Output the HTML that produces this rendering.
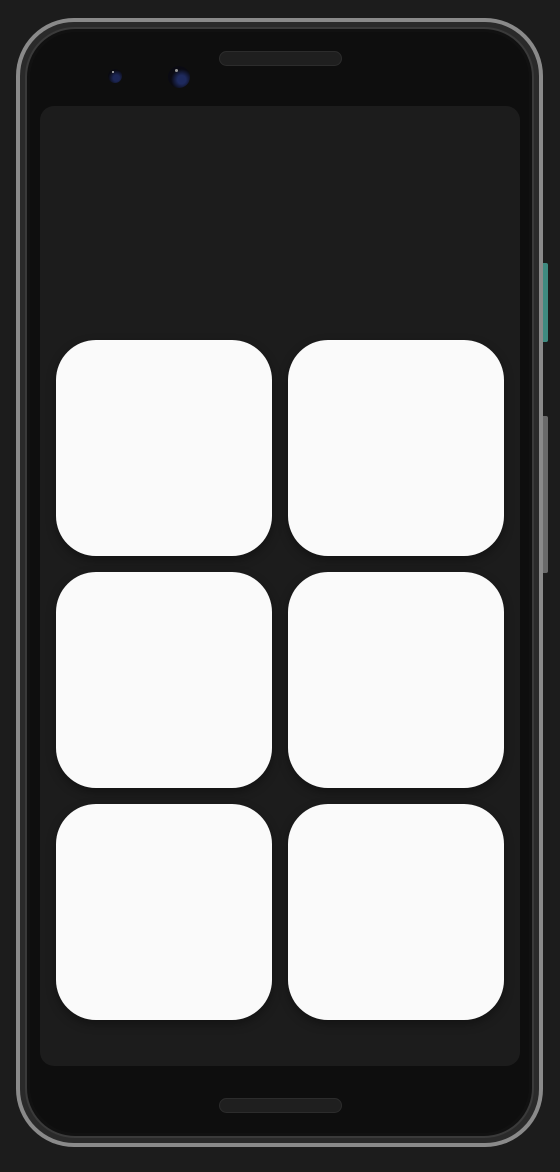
<!DOCTYPE html><html><head><style>
body{margin:0;width:560px;height:1172px;background:#1c1c1c;position:relative;overflow:hidden}
div{position:absolute;box-sizing:border-box}
.c{background:#fafafa;border-radius:40px;width:216px;height:216px;box-shadow:0 4px 10px rgba(0,0,0,.35)}
</style></head><body>
<div style="left:543px;top:263px;width:5px;height:79px;background:#3f8a80;border-radius:0 2px 2px 0"></div>
<div style="left:541px;top:416px;width:7px;height:157px;background:#6a6a6a;border-radius:0 2px 2px 0"></div>
<div style="left:252px;top:1142px;width:56px;height:5px;background:#555;border-radius:2px"></div>
<div style="left:16px;top:18px;width:527px;height:1129px;border-radius:58px;background:#8a8a8a"></div>
<div style="left:20px;top:22px;width:519px;height:1121px;border-radius:54px;background:#2a2a2a"></div>
<div style="left:25px;top:27px;width:509px;height:1111px;border-radius:50px;background:#111;border:2px solid #3a3a3a"></div>
<div style="left:30px;top:32px;width:499px;height:1101px;border-radius:46px;background:#0e0e0e"></div>
<div style="left:219px;top:51px;width:123px;height:15px;border-radius:8px;background:#1f1f1f;border:1px solid #2c2c2c"></div>
<div style="left:219px;top:1098px;width:123px;height:15px;border-radius:8px;background:#1f1f1f;border:1px solid #2c2c2c"></div>
<div style="left:108px;top:69px;width:14px;height:14px;border-radius:50%;background:radial-gradient(circle at 60% 65%,#1c2655 25%,#0a0a10 65%)"></div>
<div style="left:112px;top:71px;width:2px;height:2px;border-radius:50%;background:#bbb"></div>
<div style="left:168px;top:66px;width:22px;height:22px;border-radius:50%;background:radial-gradient(circle at 62% 62%,#1e2a5e 22%,#0a0a12 55%)"></div>
<div style="left:175px;top:69px;width:3px;height:3px;border-radius:50%;background:#999"></div>
<div style="left:40px;top:106px;width:480px;height:960px;border-radius:14px;background:#1c1c1c"></div>
<div class="c" style="left:56px;top:340px"></div><div class="c" style="left:288px;top:340px"></div>
<div class="c" style="left:56px;top:572px"></div><div class="c" style="left:288px;top:572px"></div>
<div class="c" style="left:56px;top:804px"></div><div class="c" style="left:288px;top:804px"></div>
</body></html>
